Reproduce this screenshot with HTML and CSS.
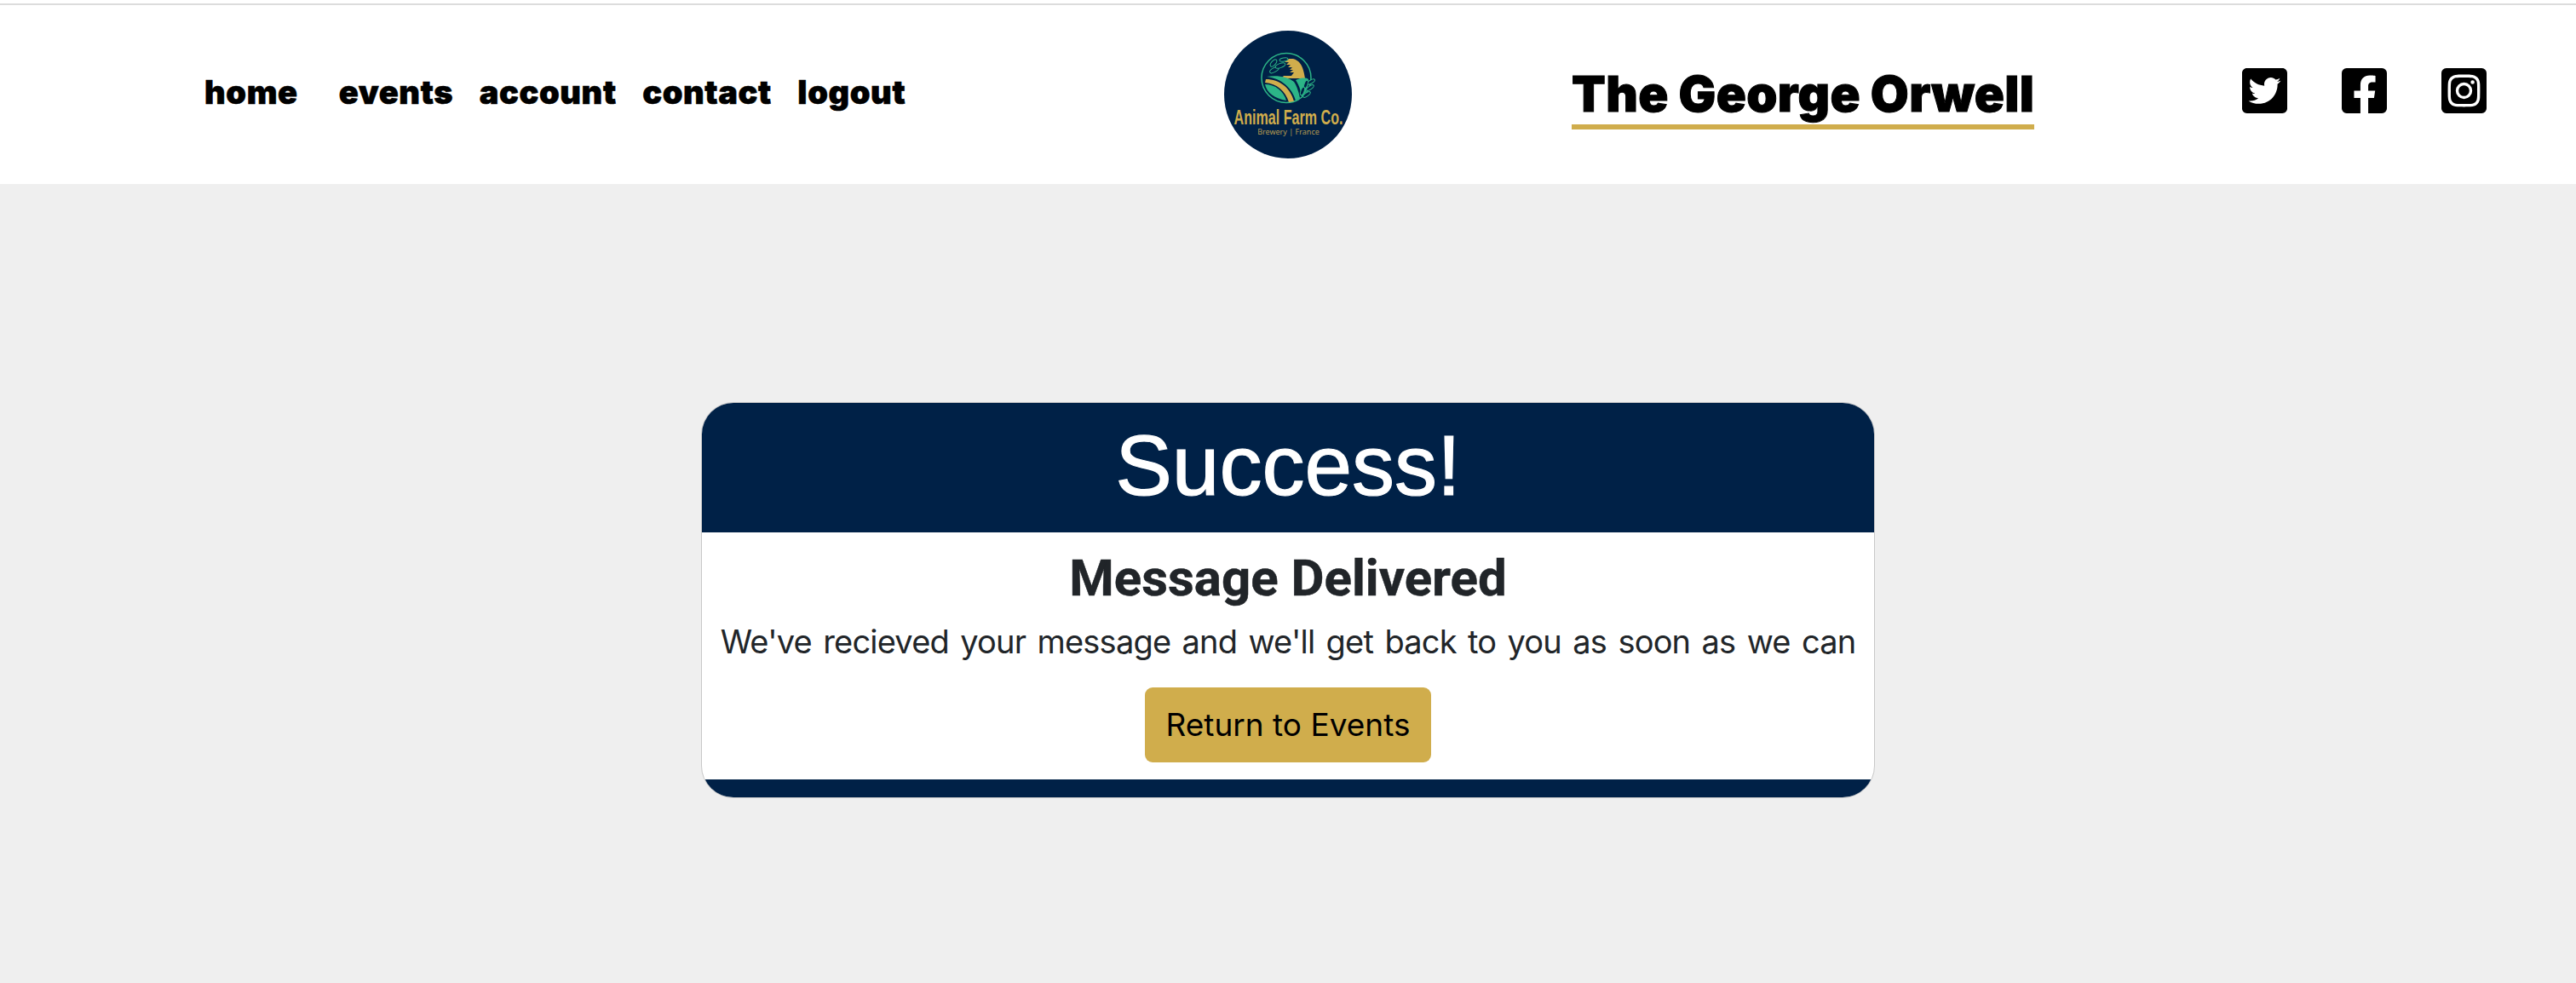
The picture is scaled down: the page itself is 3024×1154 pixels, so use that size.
FILE: index.html
```html
<!DOCTYPE html>
<html lang="en">
<head>
    <meta charset="UTF-8">
    <meta name="viewport" content="width=device-width, initial-scale=1.0">
    <title>Animal Farm Co.</title>
    <link rel="stylesheet" href="styles.css">
</head>
<body>
    <hr class="top-rule">
    <header class="site-header">
        <nav class="main-nav">
            <a class="nav-link nav-home" href="#">home</a>
            <a class="nav-link" href="#">events</a>
            <a class="nav-link" href="#">account</a>
            <a class="nav-link" href="#">contact</a>
            <a class="nav-link" href="#">logout</a>
        </nav>
        <a class="logo" href="#">
            <svg viewBox="0 0 150 150" width="150" height="150">
                <circle cx="75" cy="75" r="75" fill="#002147"/>
                <circle cx="73" cy="55.5" r="29" fill="none" stroke="#2cb587" stroke-width="1.5"/>
                <path d="M76 33h5c8 2 12 9 14 23H67l3-3h9l3-4h-5l4-3h-4l3-3h-5l3-3h-5l3-3h-5z" fill="#d0ad4c"/>
                <path d="M48 63C60 63 70 71 73 82 60 80 50 73 48 63z" fill="#2cb587"/>
                <path d="M49 57C65 57 78 67 82 83l-6 1C72 71 62 62 48 61z" fill="#d0ad4c"/>
                <path d="M50 54C62 52 75 54 82 60 86 66 88 74 89 79l-5 3C80 68 68 56 50 54z" fill="#2cb587"/>
                <path d="M84 58C90 55 96 55 99 57 99 66 96 74 91 78 90 70 88 64 84 58z" fill="#2cb587"/>
                <g fill="#002147" stroke="#2cb587" stroke-width="1">
                    <ellipse cx="59" cy="46" rx="6" ry="2.5" transform="rotate(-30 59 46)"/>
                    <ellipse cx="58" cy="38" rx="5" ry="2.5" transform="rotate(-50 58 38)"/>
                    <ellipse cx="66" cy="41" rx="6" ry="2.5" transform="rotate(-20 66 41)"/>
                    <ellipse cx="70" cy="34" rx="5" ry="2" transform="rotate(-10 70 34)"/>
                    <ellipse cx="102" cy="60" rx="5" ry="2" transform="rotate(-30 102 60)"/>
                    <ellipse cx="96" cy="63" rx="5" ry="2" transform="rotate(-70 96 63)"/>
                    <ellipse cx="101" cy="67" rx="5" ry="2" transform="rotate(-35 101 67)"/>
                    <ellipse cx="92" cy="71" rx="5" ry="2" transform="rotate(-70 92 71)"/>
                    <ellipse cx="97" cy="75" rx="5" ry="2" transform="rotate(-35 97 75)"/>
                </g>
                <g transform="translate(75.5 110) scale(.7 1)">
                    <text class="logo-name">Animal Farm Co.</text>
                </g>
                <text class="logo-sub" x="75.5" y="122">Brewery | France</text>
            </svg>
        </a>
        <div class="header-right">
            <h2 class="pub-name">The George Orwell</h2>
            <div class="socials">
                <a href="#" class="social-icon"><svg viewBox="0 32 448 448"><path d="M400 32H48C21.5 32 0 53.5 0 80v352c0 26.5 21.5 48 48 48h352c26.5 0 48-21.5 48-48V80c0-26.5-21.5-48-48-48zm-48.9 158.8c.2 2.8.2 5.7.2 8.5 0 86.7-66 186.6-186.6 186.6-37.2 0-71.7-10.8-100.7-29.4 5.3.6 10.4.8 15.8.8 30.7 0 58.9-10.4 81.4-28-28.8-.6-53-19.5-61.3-45.5 10.1 1.5 19.2 1.5 29.6-1.2-30-6.1-52.5-32.5-52.5-64.4v-.8c8.7 4.9 18.9 7.9 29.6 8.3a65.447 65.447 0 0 1-29.2-54.6c0-12.2 3.2-23.4 8.9-33.1 32.3 39.8 80.8 65.8 135.2 68.6-9.3-44.5 24-80.6 64-80.6 18.9 0 35.9 7.9 47.9 20.7 14.8-2.8 29-8.3 41.6-15.8-4.9 15.2-15.1 28-28.8 36.1 13.2-1.4 26-5.1 37.8-10.2-8.9 13.1-20.1 24.7-32.9 34z"/></svg></a>
                <a href="#" class="social-icon"><svg viewBox="0 32 448 448"><path d="M400 32H48A48 48 0 0 0 0 80v352a48 48 0 0 0 48 48h137.25V327.69h-63V256h63v-54.64c0-62.15 37-96.48 93.67-96.48 27.14 0 55.52 4.84 55.52 4.84v61h-31.27c-30.81 0-40.42 19.12-40.42 38.73V256h68.78l-11 71.69h-57.78V480H400a48 48 0 0 0 48-48V80a48 48 0 0 0-48-48z"/></svg></a>
                <a href="#" class="social-icon"><svg viewBox="0 32 448 448"><path d="M224,202.66A53.34,53.34,0,1,0,277.36,256,53.38,53.38,0,0,0,224,202.66Zm124.71-41a54,54,0,0,0-30.41-30.41c-21-8.29-71-6.43-94.3-6.43s-73.25-1.93-94.31,6.43a54,54,0,0,0-30.41,30.41c-8.28,21-6.43,71.05-6.43,94.33S91,329.26,99.32,350.33a54,54,0,0,0,30.41,30.41c21,8.29,71,6.43,94.31,6.43s73.24,1.93,94.3-6.43a54,54,0,0,0,30.41-30.41c8.35-21,6.43-71.05,6.43-94.33S357.1,182.74,348.75,161.67ZM224,338a82,82,0,1,1,82-82A81.9,81.9,0,0,1,224,338Zm85.38-148.3a19.14,19.14,0,1,1,19.13-19.14A19.1,19.1,0,0,1,309.42,189.74ZM400,32H48A48,48,0,0,0,0,80V432a48,48,0,0,0,48,48H400a48,48,0,0,0,48-48V80A48,48,0,0,0,400,32ZM382.88,322c-1.29,25.63-7.14,48.34-25.85,67s-41.4,24.63-67,25.85c-26.41,1.49-105.59,1.49-132,0-25.63-1.29-48.26-7.15-67-25.85s-24.63-41.42-25.85-67c-1.49-26.42-1.49-105.61,0-132,1.29-25.63,7.07-48.34,25.85-67s41.47-24.56,67-25.78c26.41-1.49,105.59-1.49,132,0,25.63,1.29,48.33,7.15,67,25.85s24.63,41.42,25.85,67.05C384.37,216.44,384.37,295.56,382.88,322Z"/></svg></a>
            </div>
        </div>
    </header>
    <main class="content">
        <section class="card">
            <div class="card-header">Success!</div>
            <div class="card-body">
                <h3 class="card-title">Message Delivered</h3>
                <p class="card-text">We've recieved your message and we'll get back to you as soon as we can</p>
                <a class="btn-gold" href="#">Return to Events</a>
            </div>
            <div class="card-footer"></div>
        </section>
    </main>
</body>
</html>
```

FILE: styles.css
```css
body {
    margin: 0;
    background-color: #efefef;
    font-family: Inter, "Noto Sans", sans-serif;
}
.top-rule {
    margin: 0;
    border: 0;
    border-top: 4px solid #fff;
    border-bottom: 2px solid #dcdcdc;
}
.site-header {
    display: grid;
    grid-template-columns: 1fr auto 1fr;
    align-items: center;
    height: 210px;
    background-color: #fff;
}
.main-nav {
    display: flex;
    align-items: center;
    padding-left: 240px;
    margin-top: -6px;
}
.nav-link {
    margin-right: 30.5px;
    color: #000;
    text-decoration: none;
    font-family: Inter, sans-serif;
    font-size: 38px;
    font-weight: 900;
    letter-spacing: 0.6px;
    -webkit-text-stroke: 0.6px #000;
}
.nav-home {
    margin-right: 48px;
}
.logo {
    display: flex;
}
.logo-name {
    fill: #d0ad4c;
    font-family: "Liberation Sans", sans-serif;
    font-size: 23px;
    font-weight: 700;
    text-anchor: middle;
}
.logo-sub {
    fill: #b59a50;
    font-family: "Noto Sans", sans-serif;
    font-size: 9px;
    text-anchor: middle;
}
.header-right {
    display: flex;
    align-items: center;
    justify-content: space-between;
    padding: 0 105px 0 258px;
}
.pub-name {
    margin: 1px 0 0;
    padding: 4px 0 1px;
    border-bottom: 6px solid #d0ad4c;
    color: #000;
    font-family: Inter, sans-serif;
    font-size: 58px;
    font-weight: 900;
    line-height: 70px;
    letter-spacing: 0.35px;
    white-space: nowrap;
    -webkit-text-stroke: 1px #000;
}
.socials {
    display: flex;
    gap: 64px;
    margin-top: -9px;
}
.social-icon {
    display: flex;
}
.social-icon svg {
    width: 53px;
    height: 53px;
    fill: #000;
}
.content {
    display: flex;
    justify-content: center;
    padding-top: 256px;
}
.card {
    width: 1378px;
    box-sizing: border-box;
    border: 1px solid #c8c8c8;
    border-radius: 38px;
    background-color: #fff;
    overflow: hidden;
    text-align: center;
}
.card-header {
    height: 152px;
    background-color: #002147;
    color: #fff;
    font-family: "Liberation Sans", sans-serif;
    font-size: 100px;
    line-height: 146px;
    -webkit-text-stroke: 1.2px #fff;
}
.card-body {
    display: flex;
    flex-direction: column;
    align-items: center;
    padding-top: 18px;
}
.card-title {
    margin: 0;
    color: #212529;
    font-family: Roboto, sans-serif;
    font-size: 60px;
    font-weight: 700;
    line-height: 72px;
    -webkit-text-stroke: 0.5px #212529;
}
.card-text {
    margin: 10px 0 0;
    color: #212529;
    font-size: 38px;
    line-height: 56px;
    letter-spacing: -0.8px;
    word-spacing: 3.4px;
    white-space: nowrap;
}
.btn-gold {
    margin: 26px 0 20px;
    padding: 0 25px;
    height: 88px;
    border-radius: 9px;
    background-color: #d0ad4c;
    color: #000;
    font-size: 37px;
    line-height: 88px;
    text-decoration: none;
}
.card-footer {
    height: 21px;
    background-color: #002147;
}
```
